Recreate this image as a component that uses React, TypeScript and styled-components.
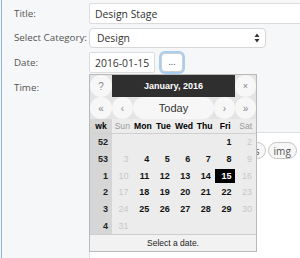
import React from 'react';
import styled, { createGlobalStyle } from 'styled-components';

const Global = createGlobalStyle`
  html, body { margin: 0; padding: 0; background: #f6f7f8; }
  body { font-family: "Open Sans", "Liberation Sans", sans-serif; }
  #root { width: 300px; height: 258px; overflow: hidden; }
`;

const Page = styled.div`
  margin-left: 1px;
  border-left: 1px solid #8db4de;
  height: 258px;
  box-sizing: border-box;
  padding: 3px 0 0 12px;
  overflow: hidden;
`;

const Form = styled.div`
  display: grid;
  grid-template-columns: 75px 1fr;
  row-gap: 4px;
  align-items: center;
`;

const Label = styled.div`
  font-size: 9.8px;
  color: #555;
  line-height: 20px;
`;

const TextInput = styled.div<{ $w: number; $h?: number }>`
  box-sizing: border-box;
  width: ${p => p.$w}px;
  height: ${p => p.$h ?? 21}px;
  border: 1px solid #dcdcdc;
  border-radius: 2px;
  background: #fff;
  font-size: 10.4px;
  color: #333;
  padding: 0 5px;
  display: flex;
  align-items: center;
  white-space: nowrap;
`;

const SelectBox = styled.div`
  box-sizing: border-box;
  width: 177px;
  height: 20px;
  border: 1px solid #d6d6d6;
  border-radius: 4px;
  background: #fff;
  font-size: 10.4px;
  color: #333;
  padding: 0 5px 0 7px;
  display: flex;
  align-items: center;
  justify-content: space-between;
`;

const DateField = styled.div`
  position: relative;
  display: flex;
  align-items: center;
  gap: 6px;
  height: 21px;
`;

const DotsButton = styled.div`
  box-sizing: border-box;
  width: 22px;
  height: 19px;
  border: 1px solid #cfcfcf;
  border-radius: 4px;
  background: #fff;
  box-shadow: 0 0 0 2px #a9cdef;
  font-size: 9px;
  color: #444;
  display: flex;
  align-items: center;
  justify-content: center;
  padding-bottom: 3px;
`;

const Popup = styled.div`
  position: absolute;
  top: 22px;
  left: 0;
  z-index: 5;
  width: 168px;
  box-sizing: border-box;
  border: 1px solid #b9b9b9;
  background: #ececec;
  font-family: "Liberation Sans", Arial, sans-serif;
`;

const HeadRow = styled.div`
  display: grid;
  grid-template-columns: 22px 1fr 21px;
  height: 22px;
  background: #e4e4e4;
`;

const RoundBtn = styled.div<{ $size?: number }>`
  display: flex;
  align-items: center;
  justify-content: center;
  background: #f7f7f7;
  border-radius: 11px;
  color: #888;
  font-size: ${p => p.$size ?? 10}px;
`;

const TitleCell = styled.div`
  background: #2f2f2f;
  color: #fff;
  font-weight: bold;
  font-size: 9px;
  display: flex;
  align-items: center;
  justify-content: center;
`;

const NavRow = styled.div`
  display: grid;
  grid-template-columns: 22px 21px 1fr 21px 21px;
  height: 22px;
  background: #e4e4e4;
`;

const TodayBtn = styled(RoundBtn)`
  color: #333;
  font-size: 11px;
`;

const Grid = styled.div`
  display: grid;
  grid-template-columns: 22px repeat(7, 1fr);
`;

const NameCell = styled.div<{ $weekend?: boolean; $wk?: boolean }>`
  height: 15px;
  display: flex;
  align-items: center;
  justify-content: center;
  font-size: 8.6px;
  font-weight: ${p => (p.$weekend ? 'normal' : 'bold')};
  color: ${p => (p.$weekend ? '#999' : '#000')};
  background: ${p => (p.$wk ? '#d6d6d6' : '#ececec')};
  border-bottom: 1px solid #d0d0d0;
  box-sizing: border-box;
`;

const WeekCell = styled.div`
  height: 16.67px;
  background: #d6d6d6;
  font-size: 9px;
  font-weight: bold;
  color: #222;
  display: flex;
  align-items: center;
  justify-content: flex-end;
  padding-right: 4px;
`;

const DayCell = styled.div<{ $weekend?: boolean; $selected?: boolean }>`
  height: ${p => (p.$selected ? 14 : 16.67)}px;
  margin: ${p => (p.$selected ? '1.5px 0 1.17px' : '0')};
  font-size: 9px;
  font-weight: ${p => (p.$weekend ? 'normal' : 'bold')};
  color: ${p => (p.$selected ? '#fff' : p.$weekend ? '#c8c8c8' : '#111')};
  background: ${p => (p.$selected ? '#000' : 'transparent')};
  display: flex;
  align-items: center;
  justify-content: flex-end;
  padding-right: 4px;
`;

const Footer = styled.div`
  height: 16px;
  border-top: 1px solid #cdcdcd;
  background: #f2f2f2;
  font-size: 8.5px;
  color: #222;
  display: flex;
  align-items: center;
  justify-content: center;
`;

const Editor = styled.div`
  grid-column: 2;
  margin-top: 30px;
  width: 230px;
  height: 140px;
  border: 1px solid #dedede;
  background: #fff;
`;

const Toolbar = styled.div`
  display: flex;
  gap: 2px;
  padding: 9px 0 0 4px;
  white-space: nowrap;
`;

const TagButton = styled.div`
  flex: none;
  height: 15px;
  border: 1px solid #c4c4c4;
  border-radius: 9px;
  background: #f7f7f7;
  padding: 0 5px;
  font-size: 10px;
  color: #555;
  display: flex;
  align-items: center;
`;

const weeks: { wk: number; days: (number | null)[] }[] = [
  { wk: 52, days: [null, null, null, null, null, 1, 2] },
  { wk: 53, days: [3, 4, 5, 6, 7, 8, 9] },
  { wk: 1, days: [10, 11, 12, 13, 14, 15, 16] },
  { wk: 2, days: [17, 18, 19, 20, 21, 22, 23] },
  { wk: 3, days: [24, 25, 26, 27, 28, 29, 30] },
  { wk: 4, days: [31, null, null, null, null, null, null] },
];

const names = ['Sun', 'Mon', 'Tue', 'Wed', 'Thu', 'Fri', 'Sat'];
const tags = ['b', 'i', 'link', 'b-quote', 'del', 'ins', 'img'];

const SelectArrows = () => (
  <svg width="6" height="10" viewBox="0 0 6 10">
    <path d="M3 0.5 L5.5 4 L0.5 4 Z" fill="#333" />
    <path d="M3 9.5 L5.5 6 L0.5 6 Z" fill="#333" />
  </svg>
);

const Calendar = () => (
  <Popup>
    <HeadRow>
      <RoundBtn>?</RoundBtn>
      <TitleCell>January, 2016</TitleCell>
      <RoundBtn $size={9}>×</RoundBtn>
    </HeadRow>
    <NavRow>
      <RoundBtn>«</RoundBtn>
      <RoundBtn>‹</RoundBtn>
      <TodayBtn>Today</TodayBtn>
      <RoundBtn>›</RoundBtn>
      <RoundBtn>»</RoundBtn>
    </NavRow>
    <Grid>
      <NameCell $wk>wk</NameCell>
      {names.map((n, i) => (
        <NameCell key={n} $weekend={i === 0 || i === 6}>
          {n}
        </NameCell>
      ))}
      {weeks.map(w => (
        <React.Fragment key={w.wk}>
          <WeekCell>{w.wk}</WeekCell>
          {w.days.map((d, i) => (
            <DayCell key={i} $weekend={i === 0 || i === 6} $selected={d === 15}>
              {d ?? ''}
            </DayCell>
          ))}
        </React.Fragment>
      ))}
    </Grid>
    <Footer>Select a date.</Footer>
  </Popup>
);

export default function App() {
  return (
    <>
      <Global />
      <Page>
        <Form>
          <Label>Title:</Label>
          <TextInput $w={230}>Design Stage</TextInput>
          <Label>Select Category:</Label>
          <SelectBox>
            <span>Design</span>
            <SelectArrows />
          </SelectBox>
          <Label>Date:</Label>
          <DateField>
            <TextInput $w={66}>2016-01-15</TextInput>
            <DotsButton>...</DotsButton>
            <Calendar />
          </DateField>
          <Label>Time:</Label>
          <TextInput $w={66} />
          <Editor>
            <Toolbar>
              {tags.map(t => (
                <TagButton key={t}>{t}</TagButton>
              ))}
            </Toolbar>
          </Editor>
        </Form>
      </Page>
    </>
  );
}
